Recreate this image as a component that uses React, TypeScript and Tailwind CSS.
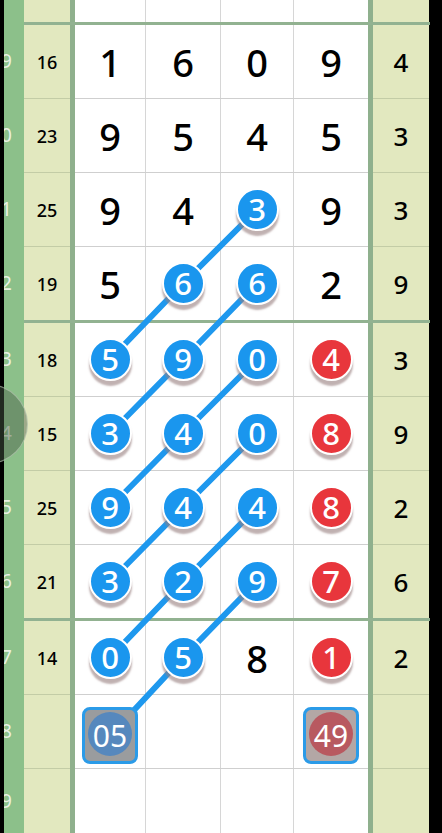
import React from "react";

type Kind = "plain" | "blue" | "red" | "boxBlue" | "boxRed" | "none";
type Cell = { v: string; k: Kind };

const P = (v: string): Cell => ({ v, k: "plain" });
const B = (v: string): Cell => ({ v, k: "blue" });
const R = (v: string): Cell => ({ v, k: "red" });
const N: Cell = { v: "", k: "none" };

type RowDef = {
  h: string;
  far: string;
  left: string;
  right: string;
  cells: Cell[];
};

const rowsA: RowDef[] = [
  { h: "h-[73px]", far: "09", left: "16", right: "4", cells: [P("1"), P("6"), P("0"), P("9")] },
  { h: "h-[73px]", far: "10", left: "23", right: "3", cells: [P("9"), P("5"), P("4"), P("5")] },
  { h: "h-[73px]", far: "11", left: "25", right: "3", cells: [P("9"), P("4"), B("3"), P("9")] },
  { h: "h-[73px]", far: "12", left: "19", right: "9", cells: [P("5"), B("6"), B("6"), P("2")] },
];
const rowsB: RowDef[] = [
  { h: "h-[73px]", far: "13", left: "18", right: "3", cells: [B("5"), B("9"), B("0"), R("4")] },
  { h: "h-[73px]", far: "14", left: "15", right: "9", cells: [B("3"), B("4"), B("0"), R("8")] },
  { h: "h-[73px]", far: "15", left: "25", right: "2", cells: [B("9"), B("4"), B("4"), R("8")] },
  { h: "h-[73px]", far: "16", left: "21", right: "6", cells: [B("3"), B("2"), B("9"), R("7")] },
];
const rowsC: RowDef[] = [
  { h: "h-[73px]", far: "17", left: "14", right: "2", cells: [B("0"), B("5"), P("8"), R("1")] },
  { h: "h-[73px]", far: "18", left: "", right: "", cells: [{ v: "05", k: "boxBlue" }, N, N, { v: "49", k: "boxRed" }] },
  { h: "h-[64px]", far: "19", left: "", right: "", cells: [N, N, N, N] },
];

const colW = ["w-[70px]", "w-[74px]", "w-[72px]", "w-[74px]"];

function CellContent({ c }: { c: Cell }) {
  if (c.k === "plain")
    return <span className="text-[38px] font-medium leading-none text-black">{c.v}</span>;
  if (c.k === "blue" || c.k === "red")
    return (
      <div
        className={`relative z-10 flex h-[43px] w-[43px] items-center justify-center rounded-full border-2 border-white text-[31px] font-medium leading-none text-white shadow-[0_5px_2px_rgba(150,125,125,0.6)] ${
          c.k === "blue" ? "bg-[#1a96ee]" : "bg-[#e8363c]"
        }`}
      >
        <span className="-mt-[1px]">{c.v}</span>
      </div>
    );
  if (c.k === "boxBlue" || c.k === "boxRed")
    return (
      <div
        className={`relative z-10 mt-[8px] flex h-[57px] w-[56px] items-center justify-center overflow-hidden rounded-[8px] border-[3px] border-[#2b9be8] ${
          c.k === "boxBlue" ? "bg-[#9a9c9e]" : "bg-[#b3a7a5]"
        }`}
      >
        <div
          className={`absolute left-[3px] top-[2px] h-[44px] w-[44px] rounded-full ${
            c.k === "boxBlue" ? "bg-[#5688bd]" : "bg-[#b85960]"
          }`}
        />
        <span className="relative text-[30px] leading-none text-white">{c.v}</span>
      </div>
    );
  return null;
}

function Row({ r }: { r: RowDef }) {
  return (
    <div className={`flex ${r.h}`}>
      <div className="flex w-[20px] shrink-0 items-center justify-end overflow-hidden bg-[#8cc08a] pr-[12px]">
        <span className="whitespace-nowrap text-[19px] leading-none text-[#e9f1e4]">{r.far}</span>
      </div>
      <div className="flex w-[46px] shrink-0 items-center justify-center bg-[#e2e8bf]">
        <span className="text-[18px] font-medium leading-none text-black">{r.left}</span>
      </div>
      <div className="w-[5px] shrink-0 bg-[#8fb08d]" />
      {r.cells.map((c, i) => (
        <React.Fragment key={i}>
          {i > 0 && <div className="w-px shrink-0 bg-[#d6d6d6]" />}
          <div className={`flex shrink-0 items-center justify-center bg-white ${colW[i]}`}>
            <CellContent c={c} />
          </div>
        </React.Fragment>
      ))}
      <div className="w-[5px] shrink-0 bg-[#8fb08d]" />
      <div className="flex w-[56px] shrink-0 items-center justify-center bg-[#e2e8bf]">
        <span className="text-[26px] font-medium leading-none text-black">{r.right}</span>
      </div>
    </div>
  );
}

function Thin() {
  return (
    <div className="flex h-px">
      <div className="w-[20px] shrink-0 bg-[#8cc08a]" />
      <div className="w-[46px] shrink-0 bg-[#c3cca6]" />
      <div className="w-[5px] shrink-0 bg-[#8fb08d]" />
      <div className="w-[293px] shrink-0 bg-[#cfcfcf]" />
      <div className="w-[5px] shrink-0 bg-[#8fb08d]" />
      <div className="w-[56px] shrink-0 bg-[#c3cca6]" />
    </div>
  );
}

function Thick() {
  return (
    <div className="flex h-[3px]">
      <div className="w-[20px] shrink-0 bg-[#8cc08a]" />
      <div className="w-[406px] shrink-0 bg-[#92b291]" />
    </div>
  );
}

function Block({ rows }: { rows: RowDef[] }) {
  return (
    <>
      {rows.map((r, i) => (
        <React.Fragment key={i}>
          {i > 0 && <Thin />}
          <Row r={r} />
        </React.Fragment>
      ))}
    </>
  );
}

const lines: [number, number][][] = [
  [[257, 209.5], [183, 283.5], [110, 359.5]],
  [[257, 283.5], [183, 359.5], [110, 433.5]],
  [[257, 359.5], [183, 433.5], [110, 507.5]],
  [[257, 433.5], [183, 507.5], [110, 581.5]],
  [[257, 507.5], [183, 581.5], [110, 657.5]],
  [[257, 581.5], [183, 657.5], [110, 736]],
];

export default function App() {
  const top: RowDef = { h: "h-[22px]", far: "", left: "", right: "", cells: [N, N, N, N] };
  return (
    <div
      className="relative flex h-[833px] w-[442px] overflow-hidden bg-black"
      style={{ fontFamily: '"Noto Sans", "Open Sans", sans-serif' }}
    >
      <div className="w-[4px] shrink-0 bg-black" />
      <div className="flex w-[426px] shrink-0 flex-col">
        <Row r={top} />
        <Thick />
        <Block rows={rowsA} />
        <Thick />
        <Block rows={rowsB} />
        <Thick />
        <Block rows={rowsC} />
      </div>
      <div className="flex-1 bg-black" />

      <svg
        className="pointer-events-none absolute left-0 top-0"
        width="442"
        height="833"
        viewBox="0 0 442 833"
      >
        {lines.map((pts, i) => (
          <polyline
            key={i}
            points={pts.map((p) => p.join(",")).join(" ")}
            fill="none"
            stroke="#1e98ee"
            strokeWidth="6"
          />
        ))}
      </svg>

      <div className="pointer-events-none absolute left-[-52px] top-[384px] h-[80px] w-[80px] rounded-full border border-[#d5e2cf]/50 bg-[#4a5e48]/45" />
    </div>
  );
}
